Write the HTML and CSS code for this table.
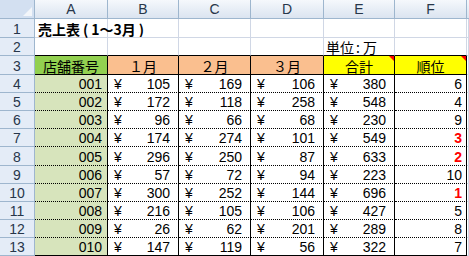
FILE: index.html
```html
<!DOCTYPE html>
<html lang="ja">
<head>
<meta charset="utf-8">
<link rel="stylesheet" href="styles.css">
</head>
<body>
<div class="sheet">
  <div class="ch corner"><svg class="tri" width="10" height="10" viewBox="0 0 10 10"><polygon points="10,1 10,10 1,10" fill="#f3f6fa"/></svg></div>
  <div class="ch">A</div><div class="ch">B</div><div class="ch">C</div><div class="ch">D</div><div class="ch">E</div><div class="ch">F</div><div class="ch last"></div>

  <div class="rh">1</div><div class="c title">売上表<span class="p">(</span>1～3月<span class="p">)</span></div><div class="c"></div><div class="c"></div><div class="c"></div><div class="c"></div><div class="c"></div><div class="c"></div>

  <div class="rh">2</div><div class="c tb"></div><div class="c tb"></div><div class="c tb"></div><div class="c tb"></div><div class="c tb unit">単位<span class="colon">:</span>万</div><div class="c tb"></div><div class="c"></div>

  <div class="rh">3</div>
  <div class="c hd green">店舗番号</div>
  <div class="c hd peach">１月</div>
  <div class="c hd peach">２月</div>
  <div class="c hd peach">３月</div>
  <div class="c hd yellow note">合計</div>
  <div class="c hd yellow note">順位</div>
  <div class="c"></div>

  <div class="rh">4</div><div class="c d id">001</div><div class="c d m"><span>¥</span><span>105</span></div><div class="c d m"><span>¥</span><span>169</span></div><div class="c d m"><span>¥</span><span>106</span></div><div class="c d m"><span>¥</span><span>380</span></div><div class="c d rk">6</div><div class="c"></div>
  <div class="rh">5</div><div class="c d id">002</div><div class="c d m"><span>¥</span><span>172</span></div><div class="c d m"><span>¥</span><span>118</span></div><div class="c d m"><span>¥</span><span>258</span></div><div class="c d m"><span>¥</span><span>548</span></div><div class="c d rk">4</div><div class="c"></div>
  <div class="rh">6</div><div class="c d id">003</div><div class="c d m"><span>¥</span><span>96</span></div><div class="c d m"><span>¥</span><span>66</span></div><div class="c d m"><span>¥</span><span>68</span></div><div class="c d m"><span>¥</span><span>230</span></div><div class="c d rk">9</div><div class="c"></div>
  <div class="rh">7</div><div class="c d id">004</div><div class="c d m"><span>¥</span><span>174</span></div><div class="c d m"><span>¥</span><span>274</span></div><div class="c d m"><span>¥</span><span>101</span></div><div class="c d m"><span>¥</span><span>549</span></div><div class="c d rk top">3</div><div class="c"></div>
  <div class="rh">8</div><div class="c d id">005</div><div class="c d m"><span>¥</span><span>296</span></div><div class="c d m"><span>¥</span><span>250</span></div><div class="c d m"><span>¥</span><span>87</span></div><div class="c d m"><span>¥</span><span>633</span></div><div class="c d rk top">2</div><div class="c"></div>
  <div class="rh">9</div><div class="c d id">006</div><div class="c d m"><span>¥</span><span>57</span></div><div class="c d m"><span>¥</span><span>72</span></div><div class="c d m"><span>¥</span><span>94</span></div><div class="c d m"><span>¥</span><span>223</span></div><div class="c d rk">10</div><div class="c"></div>
  <div class="rh">10</div><div class="c d id">007</div><div class="c d m"><span>¥</span><span>300</span></div><div class="c d m"><span>¥</span><span>252</span></div><div class="c d m"><span>¥</span><span>144</span></div><div class="c d m"><span>¥</span><span>696</span></div><div class="c d rk top">1</div><div class="c"></div>
  <div class="rh">11</div><div class="c d id">008</div><div class="c d m"><span>¥</span><span>216</span></div><div class="c d m"><span>¥</span><span>105</span></div><div class="c d m"><span>¥</span><span>106</span></div><div class="c d m"><span>¥</span><span>427</span></div><div class="c d rk">5</div><div class="c"></div>
  <div class="rh">12</div><div class="c d id">009</div><div class="c d m"><span>¥</span><span>26</span></div><div class="c d m"><span>¥</span><span>62</span></div><div class="c d m"><span>¥</span><span>201</span></div><div class="c d m"><span>¥</span><span>289</span></div><div class="c d rk">8</div><div class="c"></div>
  <div class="rh">13</div><div class="c d e id">010</div><div class="c d e m"><span>¥</span><span>147</span></div><div class="c d e m"><span>¥</span><span>119</span></div><div class="c d e m"><span>¥</span><span>56</span></div><div class="c d e m"><span>¥</span><span>322</span></div><div class="c d e rk">7</div><div class="c"></div>
</div>
</body>
</html>
```
FILE: styles.css
```css
html, body {
  margin: 0;
  padding: 0;
  background: #ffffff;
}
.sheet {
  width: 469px;
  height: 256px;
  overflow: hidden;
  display: grid;
  grid-template-columns: 35px 73px 71px 72px 73px 71px 72px 1fr;
  grid-template-rows: 19px 19px 18px 19px 18px 18px 18px 18px 19px 18px 18px 18px 18px 18px;
  font-family: "Liberation Sans Narrow", "Liberation Sans", sans-serif;
  font-size: 14px;
  color: #000;
}
.sheet > div {
  box-sizing: border-box;
  min-width: 0;
  white-space: nowrap;
  overflow: hidden;
}
.ch {
  background: linear-gradient(#f5f8fc, #dbe4f0);
  border-right: 1px solid #9eb6ce;
  border-bottom: 1px solid #9eb6ce;
  display: flex;
  align-items: flex-end;
  justify-content: center;
  color: #27364a;
  line-height: 16px;
  font-family: "Liberation Sans", sans-serif;
  font-size: 14px;
  padding-bottom: 1px;
}
.ch.corner {
  background: #d3e0f1;
  border-right: 1px solid #9eb6ce;
  justify-content: flex-end;
  align-items: flex-end;
  padding: 0 2px 2px 0;
}
.tri {
  display: block;
}
.ch.last {
  border-right: none;
}
.rh {
  background: #e4ecf7;
  border-right: 1px solid #9eb6ce;
  border-bottom: 1px solid #9eb6ce;
  display: flex;
  align-items: flex-end;
  justify-content: center;
  color: #27364a;
  line-height: 14px;
  font-family: "Liberation Sans", sans-serif;
  font-size: 14px;
  padding-bottom: 1px;
}
.c {
  border-right: 1px solid #d0d7e5;
  border-bottom: 1px solid #d0d7e5;
  display: flex;
  align-items: flex-end;
  line-height: 14px;
  padding-bottom: 1px;
}
.title {
  font-family: "Noto Sans CJK JP", sans-serif;
  font-weight: bold;
  font-size: 14px;
  padding-left: 3px;
  overflow: visible !important;
}
.p {
  margin: 0 3px;
}
.unit {
  font-family: "Noto Sans CJK JP", sans-serif;
  padding-left: 2px;
}
.colon {
  padding: 0 3px 0 2px;
}
.tb {
  border-bottom-color: #000;
}
.hd {
  border-right: 1px solid #000;
  border-bottom: 1px solid #000;
  justify-content: center;
  font-family: "Noto Sans CJK JP", sans-serif;
  position: relative;
}
.green { background: #92d050; }
.peach { background: #fabf8f; }
.yellow { background: #ffff00; }
.note::after {
  content: "";
  position: absolute;
  top: 0;
  right: 0;
  border-style: solid;
  border-width: 0 5px 5px 0;
  border-color: transparent #ff0000 transparent transparent;
}
.d {
  border-right: 1px solid #000;
  border-bottom: 1px dotted #000;
}
.d.e {
  border-bottom: 1px solid #000;
}
.id {
  background: #d7e4bc;
  justify-content: flex-end;
  padding-right: 5px;
}
.m {
  justify-content: space-between;
  padding-left: 6px;
  padding-right: 8px;
}
.rk {
  justify-content: flex-end;
  padding-right: 4px;
}
.rk.top {
  color: #ff0000;
  font-weight: bold;
  font-family: "Liberation Sans", sans-serif;
}
```
